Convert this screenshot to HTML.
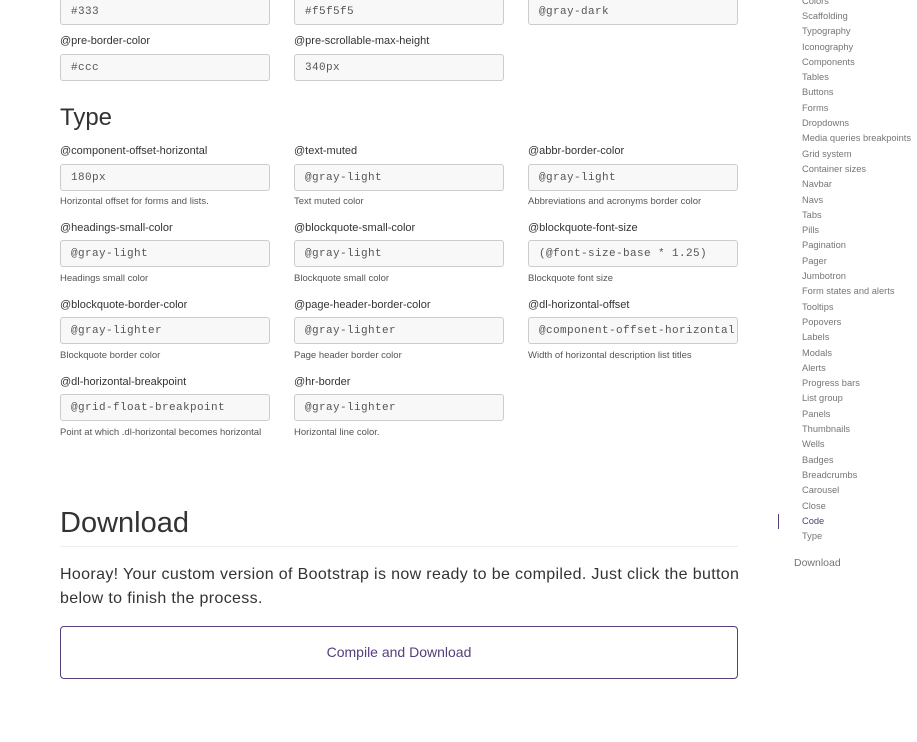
<!DOCTYPE html>
<html><head><meta charset="utf-8"><style>
body{margin:0;width:917px;height:742px;overflow:hidden;background:#fff;font-family:"Liberation Sans",sans-serif;color:#333;position:relative}
.l{position:absolute;font-size:11px;line-height:14px;color:#333;white-space:nowrap}
.i{position:absolute;height:25px;border:1px solid #ccc;border-radius:3px;background:#f8f8f8;font-family:"Liberation Mono",monospace;font-size:11px;letter-spacing:0.4px;line-height:27px;color:#555;padding-left:10px;box-sizing:content-box;width:198px;overflow:hidden;white-space:nowrap}
.h{position:absolute;font-size:9.5px;line-height:12px;color:#555;white-space:nowrap}
.n{position:absolute;left:802px;font-size:9.3px;color:#767676;white-space:nowrap;line-height:12px}
</style></head><body>
<div class="i" style="left:60px;top:-2px">#333</div>
<div class="i" style="left:294px;top:-2px">#f5f5f5</div>
<div class="i" style="left:528px;top:-2px">@gray-dark</div>
<div class="l" style="left:60px;top:34px">@pre-border-color</div>
<div class="l" style="left:294px;top:34px">@pre-scrollable-max-height</div>
<div class="i" style="left:60px;top:54px">#ccc</div>
<div class="i" style="left:294px;top:54px">340px</div>
<div style="position:absolute;left:60px;top:103px;font-size:24px;line-height:30px;color:#333">Type</div>

<div class="l" style="left:60px;top:144px">@component-offset-horizontal</div>
<div class="l" style="left:294px;top:144px">@text-muted</div>
<div class="l" style="left:528px;top:144px">@abbr-border-color</div>
<div class="i" style="left:60px;top:164px">180px</div>
<div class="i" style="left:294px;top:164px">@gray-light</div>
<div class="i" style="left:528px;top:164px">@gray-light</div>
<div class="h" style="left:60px;top:196px">Horizontal offset for forms and lists.</div>
<div class="h" style="left:294px;top:196px">Text muted color</div>
<div class="h" style="left:528px;top:196px">Abbreviations and acronyms border color</div>

<div class="l" style="left:60px;top:221px">@headings-small-color</div>
<div class="l" style="left:294px;top:221px">@blockquote-small-color</div>
<div class="l" style="left:528px;top:221px">@blockquote-font-size</div>
<div class="i" style="left:60px;top:240px">@gray-light</div>
<div class="i" style="left:294px;top:240px">@gray-light</div>
<div class="i" style="left:528px;top:240px">(@font-size-base * 1.25)</div>
<div class="h" style="left:60px;top:273px">Headings small color</div>
<div class="h" style="left:294px;top:273px">Blockquote small color</div>
<div class="h" style="left:528px;top:273px">Blockquote font size</div>

<div class="l" style="left:60px;top:298px">@blockquote-border-color</div>
<div class="l" style="left:294px;top:298px">@page-header-border-color</div>
<div class="l" style="left:528px;top:298px">@dl-horizontal-offset</div>
<div class="i" style="left:60px;top:317px">@gray-lighter</div>
<div class="i" style="left:294px;top:317px">@gray-lighter</div>
<div class="i" style="left:528px;top:317px">@component-offset-horizontal</div>
<div class="h" style="left:60px;top:350px">Blockquote border color</div>
<div class="h" style="left:294px;top:350px">Page header border color</div>
<div class="h" style="left:528px;top:350px">Width of horizontal description list titles</div>

<div class="l" style="left:60px;top:375px">@dl-horizontal-breakpoint</div>
<div class="l" style="left:294px;top:375px">@hr-border</div>
<div class="i" style="left:60px;top:394px">@grid-float-breakpoint</div>
<div class="i" style="left:294px;top:394px">@gray-lighter</div>
<div class="h" style="left:60px;top:427px">Point at which .dl-horizontal becomes horizontal</div>
<div class="h" style="left:294px;top:427px">Horizontal line color.</div>

<div style="position:absolute;left:60px;top:505px;font-size:29px;line-height:36px;color:#333">Download</div>
<div style="position:absolute;left:60px;top:546px;width:678px;height:1px;background:#eee"></div>
<div style="position:absolute;left:60px;top:563px;width:700px;font-size:16px;letter-spacing:0.35px;line-height:24px;color:#333">Hooray! Your custom version of Bootstrap is now ready to be compiled. Just click the button below to finish the process.</div>
<div style="position:absolute;left:60px;top:626px;width:676px;height:51px;border:1px solid #563d7c;border-radius:4px;text-align:center;line-height:51px;font-size:14px;color:#563d7c">Compile and Download</div>

<div class="n" style="top:-5px">Colors</div>
<div class="n" style="top:10px">Scaffolding</div>
<div class="n" style="top:25px">Typography</div>
<div class="n" style="top:41px">Iconography</div>
<div class="n" style="top:56px">Components</div>
<div class="n" style="top:71px">Tables</div>
<div class="n" style="top:86px">Buttons</div>
<div class="n" style="top:102px">Forms</div>
<div class="n" style="top:117px">Dropdowns</div>
<div class="n" style="top:132px">Media queries breakpoints</div>
<div class="n" style="top:148px">Grid system</div>
<div class="n" style="top:163px">Container sizes</div>
<div class="n" style="top:178px">Navbar</div>
<div class="n" style="top:194px">Navs</div>
<div class="n" style="top:209px">Tabs</div>
<div class="n" style="top:224px">Pills</div>
<div class="n" style="top:239px">Pagination</div>
<div class="n" style="top:255px">Pager</div>
<div class="n" style="top:270px">Jumbotron</div>
<div class="n" style="top:285px">Form states and alerts</div>
<div class="n" style="top:301px">Tooltips</div>
<div class="n" style="top:316px">Popovers</div>
<div class="n" style="top:331px">Labels</div>
<div class="n" style="top:347px">Modals</div>
<div class="n" style="top:362px">Alerts</div>
<div class="n" style="top:377px">Progress bars</div>
<div class="n" style="top:392px">List group</div>
<div class="n" style="top:408px">Panels</div>
<div class="n" style="top:423px">Thumbnails</div>
<div class="n" style="top:438px">Wells</div>
<div class="n" style="top:454px">Badges</div>
<div class="n" style="top:469px">Breadcrumbs</div>
<div class="n" style="top:484px">Carousel</div>
<div class="n" style="top:500px">Close</div>
<div class="n" style="top:515px;color:#563d7c">Code</div>
<div class="n" style="top:530px">Type</div>
<div style="position:absolute;left:778px;top:514px;width:1px;height:15px;background:#563d7c"></div>
<div class="n" style="left:794px;top:557px;font-size:10.5px">Download</div>
</body></html>
